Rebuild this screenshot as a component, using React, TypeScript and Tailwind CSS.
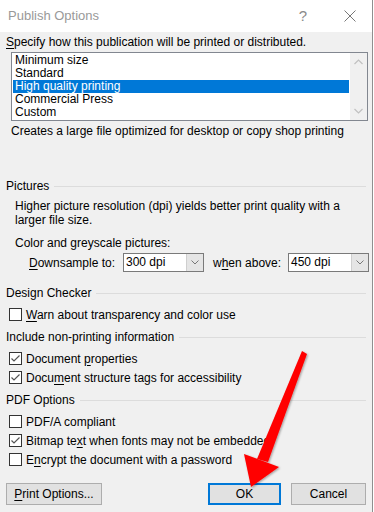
import React from "react";

const font = { fontFamily: '"Liberation Sans", Arial, sans-serif' };

function U({ children }: { children: React.ReactNode }) {
  return <span className="underline underline-offset-[2px]">{children}</span>;
}

function SectionHeading({ title }: { title: string }) {
  return (
    <div className="flex h-[16px] items-center pr-[6px]">
      <span className="text-[12px] text-black">{title}</span>
      <div className="ml-[5px] h-px flex-1 bg-[#dcdcdc]" />
    </div>
  );
}

function Checkbox({ checked, children }: { checked?: boolean; children: React.ReactNode }) {
  return (
    <div className="flex h-[19px] items-center pl-[9px]">
      <div className="flex h-[13px] w-[13px] items-center justify-center border border-[#333333] bg-white">
        {checked && (
          <svg width="11" height="11" viewBox="0 0 11 11">
            <path d="M1.5 5.5 L4 8 L9.5 2.5" fill="none" stroke="#555" strokeWidth="1.2" />
          </svg>
        )}
      </div>
      <span className="ml-[4px] text-[12px] text-black">{children}</span>
    </div>
  );
}

function Chevron({ up }: { up?: boolean }) {
  return (
    <svg width="9" height="6" viewBox="0 0 9 6">
      <path d={up ? "M0.5 5 L4.5 1 L8.5 5" : "M0.5 1 L4.5 5 L8.5 1"} fill="none" stroke="#c0c0c0" strokeWidth="1.2" />
    </svg>
  );
}

function Select({ value }: { value: string }) {
  return (
    <div className="flex h-[19px] w-[81px] border border-[#7a7a7a] bg-white">
      <span className="flex-1 pl-[2px] text-[12px] leading-[17px] text-black">{value}</span>
      <div className="flex w-[17px] items-center justify-center border-l border-[#cfcfcf] bg-[#e5e5e5]">
        <svg width="8" height="5" viewBox="0 0 8 5">
          <path d="M0.5 0.5 L4 4 L7.5 0.5" fill="none" stroke="#777" strokeWidth="1" />
        </svg>
      </div>
    </div>
  );
}

const items = ["Minimum size", "Standard", "High quality printing", "Commercial Press", "Custom"];

export default function App() {
  return (
    <div className="relative h-[512px] w-[374px] overflow-hidden bg-white" style={font}>
      <div className="flex h-[512px] w-[373px] flex-col border-r border-[#8f8f8f] bg-[#f0f0f0]">
        {/* Title bar */}
        <div className="flex h-[32px] items-center bg-white pl-[8px]">
          <span className="text-[13px] text-[#999999]">Publish Options</span>
          <span className="ml-auto mr-[37px] text-[15px] font-light text-[#8a8a8a]">?</span>
          <svg width="12" height="12" viewBox="0 0 12 12" className="mr-[16px]">
            <path d="M0.5 0.5 L11.5 11.5 M11.5 0.5 L0.5 11.5" stroke="#777" strokeWidth="1" />
          </svg>
        </div>

        <div className="flex h-[20px] items-center pl-[6px] text-[12px] text-black">
          <span>
            <U>S</U>pecify how this publication will be printed or distributed.
          </span>
        </div>

        {/* List box */}
        <div className="ml-[11px] flex h-[69px] w-[357px] border border-[#828790] bg-white">
          <div className="flex flex-1 flex-col p-px">
            {items.map((t, i) => (
              <div
                key={t}
                className={
                  i === 2
                    ? "h-[13px] bg-[#0078d7] pl-[2px] text-[12px] leading-[13px] text-white"
                    : "h-[13px] pl-[2px] text-[12px] leading-[13px] text-black"
                }
              >
                {t}
              </div>
            ))}
          </div>
          <div className="flex w-[17px] flex-col items-center justify-between bg-[#f0f0f0] py-[6px]">
            <Chevron up />
            <Chevron />
          </div>
        </div>

        <div className="flex h-[20px] items-center pl-[11px] text-[12px] text-black">
          Creates a large file optimized for desktop or copy shop printing
        </div>

        <div className="h-[37px]" />

        {/* Pictures */}
        <div className="pl-[6px]">
          <SectionHeading title="Pictures" />
        </div>
        <div className="mt-[5px] pl-[15px] text-[12px] leading-[14px] text-black">
          Higher picture resolution (dpi) yields better print quality with a
          <br />
          larger file size.
        </div>
        <div className="mt-[8px] flex h-[16px] items-center pl-[15px] text-[12px] text-black">
          Color and greyscale pictures:
        </div>
        <div className="mt-[2px] flex h-[19px] items-center text-[12px] text-black">
          <span className="ml-[29px] w-[94px]">
            <U>D</U>ownsample to:
          </span>
          <Select value="300 dpi" />
          <span className="ml-[9px] w-[75px]">
            w<U>h</U>en above:
          </span>
          <Select value="450 dpi" />
        </div>

        {/* Design Checker */}
        <div className="mt-[13px] pl-[6px]">
          <SectionHeading title="Design Checker" />
        </div>
        <div className="mt-[4px]">
          <Checkbox>
            <U>W</U>arn about transparency and color use
          </Checkbox>
        </div>

        {/* Non-printing */}
        <div className="mt-[5px] pl-[6px]">
          <SectionHeading title="Include non-printing information" />
        </div>
        <div className="mt-[4px]">
          <Checkbox checked>
            Document <U>p</U>roperties
          </Checkbox>
          <Checkbox checked>
            Docu<U>m</U>ent structure tags for accessibility
          </Checkbox>
        </div>

        {/* PDF */}
        <div className="mt-[5px] pl-[6px]">
          <SectionHeading title="PDF Options" />
        </div>
        <div className="mt-[4px]">
          <Checkbox>PDF/A compliant</Checkbox>
          <Checkbox checked>
            Bitmap te<U>x</U>t when fonts may not be embedded
          </Checkbox>
          <Checkbox>
            E<U>n</U>crypt the document with a password
          </Checkbox>
        </div>

        {/* Buttons */}
        <div className="mt-[14px] flex h-[22px] items-stretch text-[12px] text-black">
          <button className="ml-[6px] w-[96px] border border-[#adadad] bg-[#e1e1e1]">
            <U>P</U>rint Options...
          </button>
          <button className="ml-auto w-[73px] border-2 border-[#0078d7] bg-[#e1e1e1]">OK</button>
          <button className="ml-[10px] mr-[6px] w-[75px] border border-[#adadad] bg-[#e1e1e1]">Cancel</button>
        </div>
      </div>

      {/* Red annotation arrow */}
      <svg className="pointer-events-none absolute left-0 top-0" width="374" height="512" viewBox="0 0 374 512">
        <defs>
          <filter id="sh" x="-20%" y="-20%" width="140%" height="140%">
            <feDropShadow dx="1" dy="1" stdDeviation="1" floodColor="#000" floodOpacity="0.35" />
          </filter>
        </defs>
        <g filter="url(#sh)" fill="#ff0000">
          <path d="M302 351 L307 354 L268 462 L257 459 Z" />
          <path d="M244 454 L279 467 L251 487 Z" />
        </g>
      </svg>
    </div>
  );
}
